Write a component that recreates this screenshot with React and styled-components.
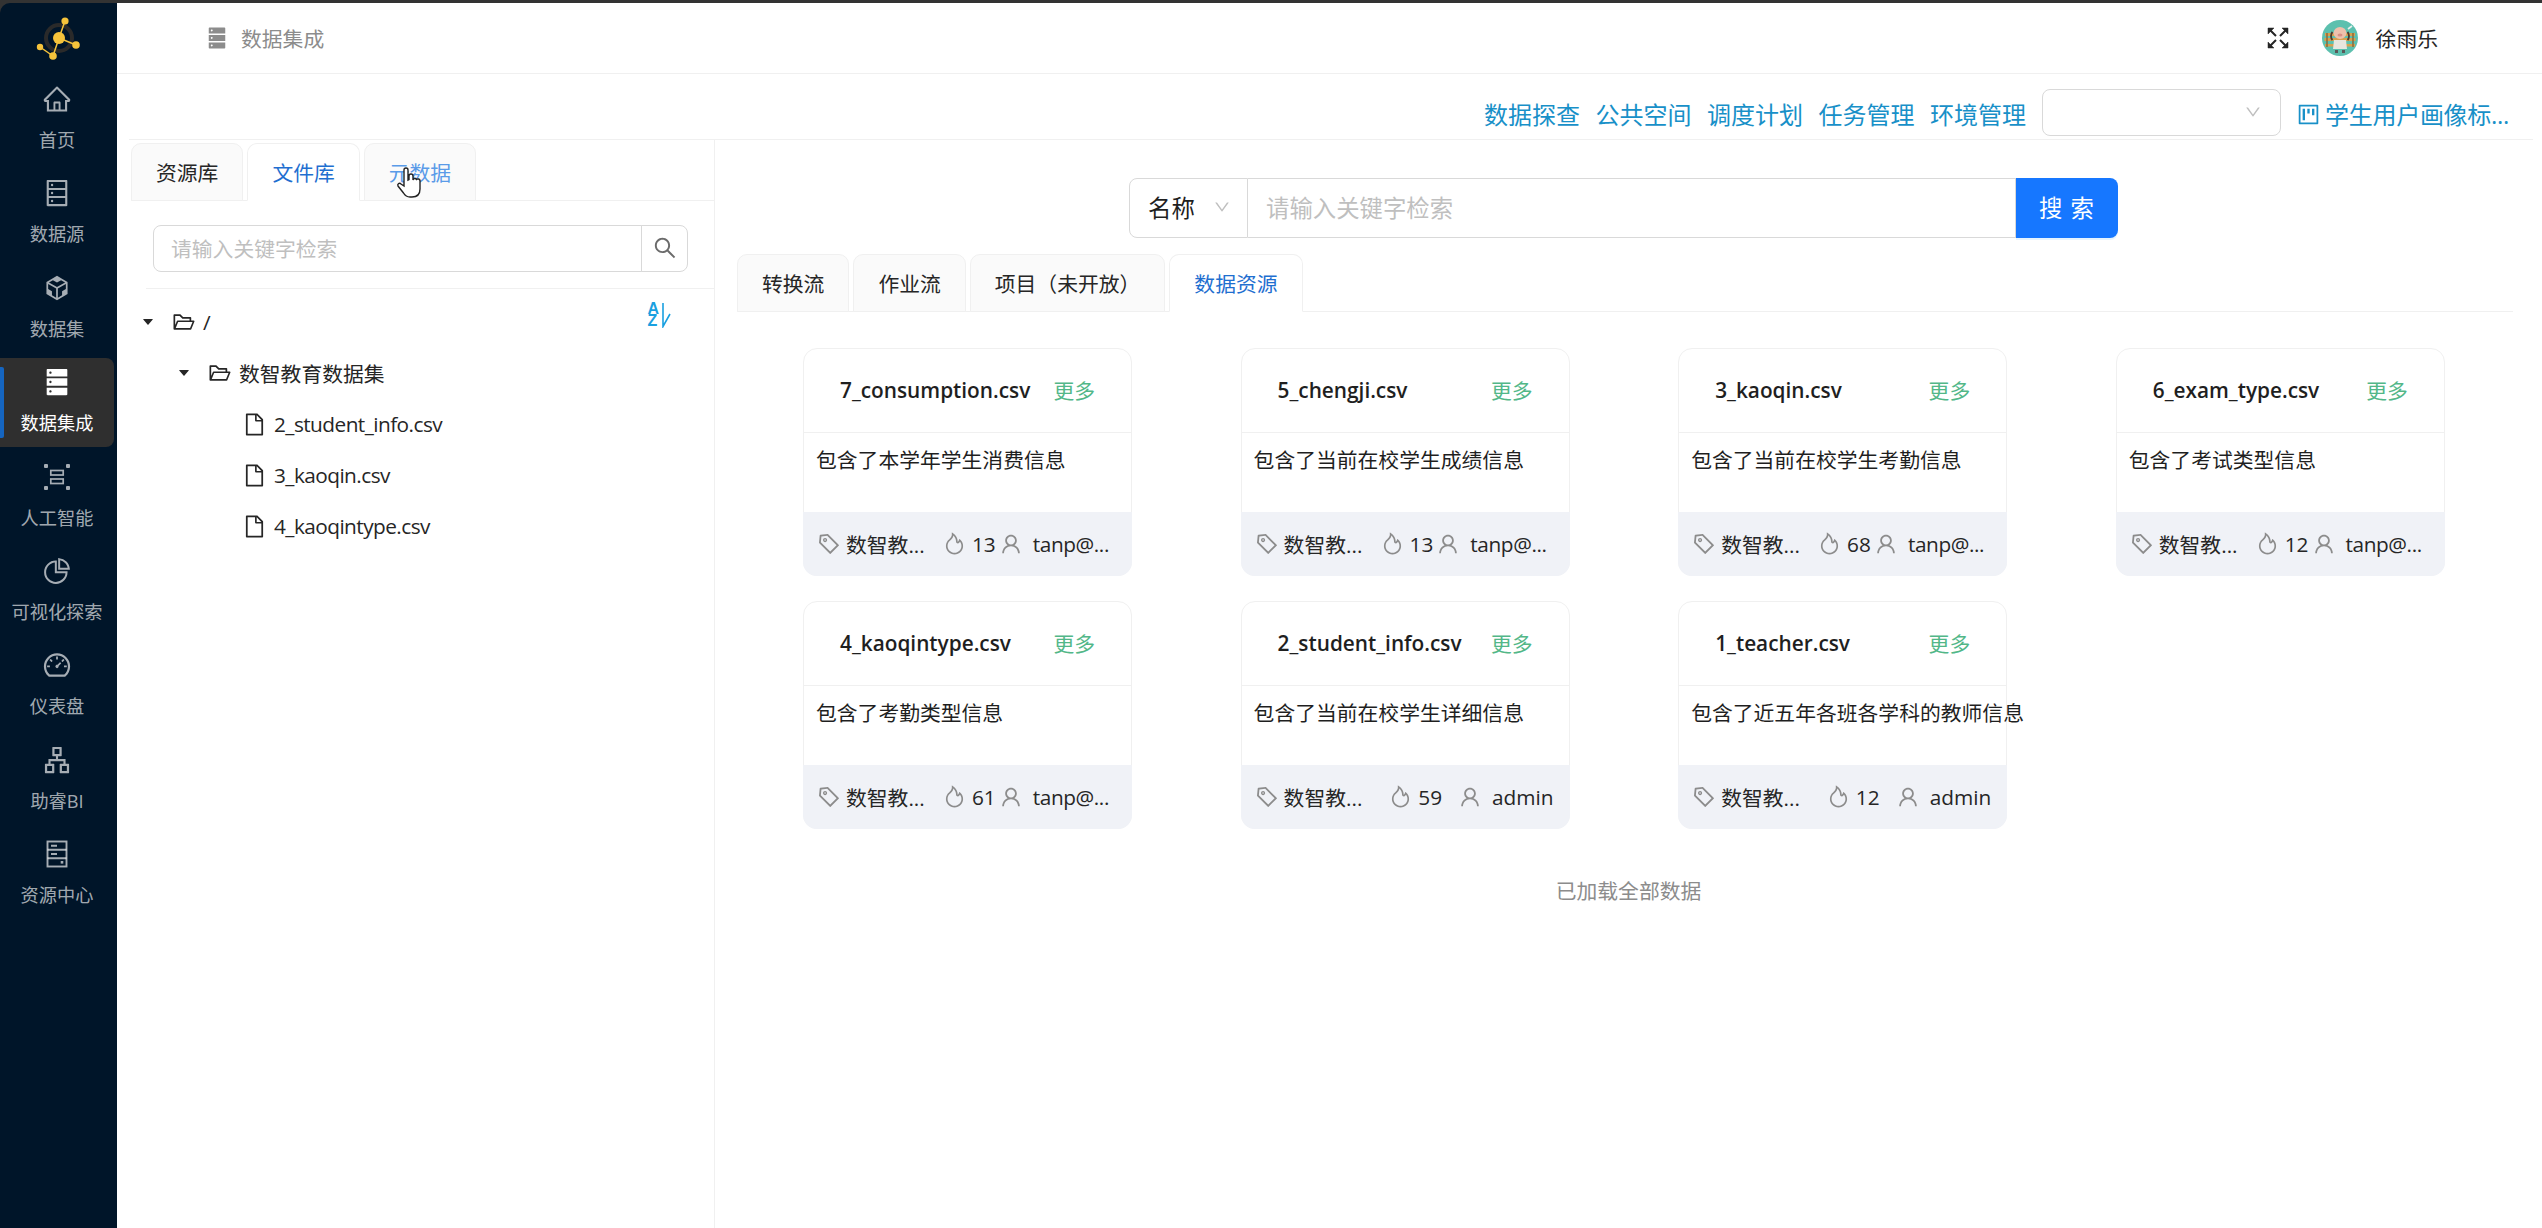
import React from 'react';
import styled, { createGlobalStyle } from 'styled-components';
import {
  AiOutlineHome, AiOutlineDatabase, AiOutlineCodeSandbox, AiFillDatabase,
  AiOutlinePieChart, AiOutlineDashboard, AiOutlineApartment, AiOutlineSearch, AiOutlineDown,
  AiOutlineFolderOpen, AiOutlineFile, AiFillCaretDown, AiOutlineTag,
  AiOutlineFire, AiOutlineUser, AiOutlineProject,
} from 'react-icons/ai';

const GlobalStyle = createGlobalStyle`
  html, body { margin: 0; padding: 0; height: 100%; }
  body {
    font-family: "Open Sans", "Noto Sans CJK SC", sans-serif;
    font-size: 20.8px;
    color: #1f1f1f;
    background: #fff;
  }
  * { box-sizing: border-box; }
`;

const Shell = styled.div`
  display: flex;
  height: 100vh;
  min-height: 1228px;
  padding-top: 3px;
  background: #333;
  overflow: hidden;
`;

const Sidebar = styled.aside`
  width: 117px;
  flex: none;
  background: #001529;
  border-top-left-radius: 10px;
  display: flex;
  flex-direction: column;
`;

const LogoBox = styled.div`
  height: 72px;
  display: flex;
  align-items: center;
  justify-content: center;
`;

const NavList = styled.nav`
  display: flex;
  flex-direction: column;
  gap: 5.9px;
`;

const NavItem = styled.div`
  position: relative;
  width: 114px;
  height: 88.5px;
  padding-top: 9px;
  display: flex;
  flex-direction: column;
  align-items: center;
  gap: 14px;
  border-radius: 0 8px 8px 0;
  color: ${(p) => (p.$active ? '#fff' : 'rgba(255,255,255,0.65)')};
  background: ${(p) => (p.$active ? '#2f2f2f' : 'transparent')};
  font-size: 18.2px;
  line-height: 24px;
  svg { width: 30px; height: 30px; flex: none; }
  &::before {
    content: '';
    display: ${(p) => (p.$active ? 'block' : 'none')};
    position: absolute;
    left: 0;
    top: 9px;
    bottom: 9px;
    width: 4px;
    background: #1565c0;
    border-radius: 0 2px 2px 0;
  }
`;

const Main = styled.div`
  flex: 1;
  min-width: 0;
  display: flex;
  flex-direction: column;
  background: #fff;
`;

const Header = styled.header`
  height: 71px;
  flex: none;
  display: flex;
  align-items: center;
  padding: 0 104px 0 88px;
  border-bottom: 1px solid #f0f0f0;
`;

const Crumb = styled.div`
  display: flex;
  align-items: center;
  gap: 12px;
  color: #8c8c8c;
  svg { font-size: 24px; }
`;

const UserBox = styled.div`
  margin-left: auto;
  display: flex;
  align-items: center;
  color: #262626;
  svg.full { margin-right: 32px; }
  span { margin-left: 18px; }
`;

const Toolbar = styled.div`
  height: 66px;
  flex: none;
  margin: 0 9px 0 12px;
  display: flex;
  align-items: center;
  justify-content: flex-end;
  gap: 15.5px;
  padding: 11px 24px 0 0;
  border-bottom: 1px solid #f0f0f0;
`;

const ToolLink = styled.a`
  padding-top: 5px;
  color: #1890c8;
  font-size: 24px;
  line-height: 32px;
  white-space: nowrap;
`;

const ProjectLink = styled(ToolLink)`
  display: flex;
  align-items: center;
  gap: 4px;
  letter-spacing: -0.3px;
  svg { font-size: 25px; }
`;

const SelectBox = styled.div`
  width: ${(p) => p.$width}px;
  height: ${(p) => p.$height}px;
  flex: none;
  display: flex;
  align-items: center;
  justify-content: space-between;
  padding: 0 18px;
  background: #fff;
  border: 1px solid #d9d9d9;
  border-radius: 8px;
  svg { font-size: 18px; color: #bfbfbf; margin-left: auto; }
`;

const Content = styled.div`
  flex: 1;
  display: flex;
  min-height: 0;
`;

const LeftPanel = styled.section`
  width: 598px;
  flex: none;
  padding-top: 3px;
  border-right: 1px solid #f0f0f0;
`;

const TabRow = styled.div`
  height: 58px;
  margin-left: ${(p) => p.$left}px;
  display: flex;
  gap: 4px;
  border-bottom: 1px solid #f0f0f0;
`;

const Tab = styled.div`
  height: 58px;
  padding: 0 24px;
  display: flex;
  align-items: center;
  white-space: nowrap;
  background: ${(p) => (p.$active ? '#fff' : '#fafafa')};
  color: ${(p) => (p.$active ? '#1f6fd0' : p.$hover ? '#5a9be8' : '#262626')};
  border: 1px solid #f0f0f0;
  border-bottom-color: ${(p) => (p.$active ? '#fff' : '#f0f0f0')};
  border-radius: 10px 10px 0 0;
`;

const HoverTab = styled(Tab)`
  position: relative;
`;

const HandCursor = styled.svg`
  position: absolute;
  left: 30px;
  top: 21px;
  width: 28px;
  height: 34px;
`;

const TreeSearch = styled.div`
  display: flex;
  width: 535px;
  height: 47px;
  margin: 23.5px 0 0 36px;
`;

const TreeInput = styled.div`
  flex: 1;
  display: flex;
  align-items: center;
  padding-left: 17px;
  color: #bfbfbf;
  border: 1px solid #d9d9d9;
  border-radius: 8px 0 0 8px;
`;

const TreeButton = styled.div`
  width: 47px;
  margin-left: -1px;
  display: flex;
  align-items: center;
  justify-content: center;
  border: 1px solid #d9d9d9;
  border-radius: 0 8px 8px 0;
  svg { font-size: 26px; color: #6b6b6b; }
`;

const TreeDivider = styled.div`
  height: 1px;
  margin: 16px 0 8px 29px;
  background: #f0f0f0;
`;

const TreeRow = styled.div`
  height: 51px;
  display: flex;
  align-items: center;
  padding-left: ${(p) => p.$indent}px;
  color: #262626;
  letter-spacing: ${(p) => (p.$file ? '-0.55px' : '0')};
  svg.caret { font-size: 14px; margin-right: 17px; }
  svg.folder { font-size: 24px; margin-right: 7px; }
  svg.file { font-size: 25px; margin-right: 7px; }
`;

const SortButton = styled.div`
  margin: -13px 43px 0 auto;
  display: flex;
  align-items: flex-start;
  gap: 3px;
  color: #1aa0e0;
`;

const SortLetters = styled.div`
  display: flex;
  flex-direction: column;
  font-family: "Liberation Sans", sans-serif;
  font-size: 16px;
  font-weight: 700;
  line-height: 12px;
`;

const RightPanel = styled.section`
  flex: 1;
  min-width: 0;
  padding-top: 37.5px;
`;

const SearchGroup = styled.div`
  display: flex;
  width: 989px;
  height: 60px;
  margin-left: 414px;
  font-size: 23.4px;
`;

const NameSelect = styled(SelectBox)`
  padding: 0 16px 2px 18px;
  border-radius: 8px 0 0 8px;
  color: #1f1f1f;
`;

const SearchInput = styled.div`
  flex: 1;
  display: flex;
  align-items: center;
  padding: 0 0 2px 18px;
  color: #bfbfbf;
  border: 1px solid #d9d9d9;
  border-left: none;
`;

const SearchButton = styled.div`
  width: 102px;
  display: flex;
  align-items: center;
  justify-content: center;
  padding-bottom: 2px;
  color: #fff;
  background: #1677ff;
  border-radius: 0 8px 8px 0;
  letter-spacing: 1px;
  box-shadow: 0 2px 0 rgba(5, 145, 255, 0.1);
`;

const ContentTabs = styled(TabRow)`
  margin: 16.5px 29px 0 ${(p) => p.$left}px;
`;

const CardGrid = styled.div`
  display: grid;
  grid-template-columns: repeat(4, 329px);
  column-gap: 108.6px;
  row-gap: 25px;
  margin: 35.5px 0 0 88px;
`;

const Card = styled.article`
  height: 228px;
  display: flex;
  flex-direction: column;
  background: #fff;
  border: 1px solid #f0f0f0;
  border-radius: 14px;
`;

const CardHead = styled.div`
  height: 84px;
  flex: none;
  display: flex;
  align-items: center;
  padding: 0 36px;
  border-bottom: 1px solid #f0f0f0;
`;

const CardTitle = styled.div`
  flex: 1;
  font-weight: 600;
  color: #1f1f1f;
  white-space: nowrap;
`;

const MoreLink = styled.a`
  color: #52b788;
`;

const CardBody = styled.div`
  flex: 1;
  padding: 13.5px 12px 0;
  line-height: 28px;
  white-space: nowrap;
  color: #1f1f1f;
`;

const CardFoot = styled.div`
  height: 64px;
  flex: none;
  margin: 0 -1px -1px;
  padding: 0 16px 0 14px;
  display: flex;
  align-items: center;
  background: #f0f2f7;
  border-radius: 0 0 14px 14px;
  color: #262626;
  svg { color: #8c8c8c; font-size: 24px; flex: none; }
`;

const TagCell = styled.div`
  display: flex;
  align-items: center;
  gap: 5px;
  svg { transform: scaleX(-1); }
`;

const HeatCell = styled.div`
  margin-left: auto;
  display: flex;
  align-items: center;
  gap: 5px;
  svg { font-size: 25px; }
`;

const OwnerCell = styled.div`
  margin-left: ${(p) => (p.$short ? 3 : 16)}px;
  margin-right: ${(p) => (p.$short ? 7 : 0)}px;
  display: flex;
  align-items: center;
  gap: 10px;
  letter-spacing: ${(p) => (p.$short ? '-0.4px' : '0')};
`;

const LoadedNote = styled.div`
  margin-top: 48px;
  text-align: center;
  line-height: 28px;
  color: #8c8c8c;
`;

function ScanIcon() {
  return (
    <svg viewBox="0 0 30 30" fill="currentColor">
      <rect x="2" y="2" width="4" height="4" rx="1" />
      <rect x="24" y="2" width="4" height="4" rx="1" />
      <rect x="2" y="24" width="4" height="4" rx="1" />
      <rect x="24" y="24" width="4" height="4" rx="1" />
      <rect x="8.800" y="8.500" width="12.400" height="4.500" fill="none" stroke="currentColor" strokeWidth="1.700" />
      <rect x="8.800" y="17" width="12.400" height="4.500" fill="none" stroke="currentColor" strokeWidth="1.700" />
    </svg>
  );
}

function ResourceIcon() {
  return (
    <svg viewBox="0 0 30 30" fill="none" stroke="currentColor" strokeWidth="1.900">
      <rect x="5.500" y="2.500" width="19" height="25" />
      <path d="M5.500 10.800h19M5.500 19.300h19" />
      <path d="M9 6.700h6M9 15h6" />
      <rect x="18.700" y="22" width="2.600" height="2.600" fill="currentColor" stroke="none" />
    </svg>
  );
}

function ExpandIcon() {
  return (
    <svg className="full" width="24" height="24" viewBox="0 0 24 24" fill="#262626" stroke="#262626" strokeWidth="2">
      <path d="M4 4l6 6M20 4l-6 6M4 20l6-6M20 20l-6-6" fill="none" />
      <path d="M2 2h6l-6 6zM22 2h-6l6 6zM2 22h6l-6-6zM22 22h-6l6-6z" strokeWidth="0.500" />
    </svg>
  );
}

function SortArrow() {
  return (
    <svg width="9" height="25" viewBox="0 0 9 25" fill="none" stroke="currentColor" strokeWidth="1.600">
      <path d="M1 0v23.500L8 11" />
    </svg>
  );
}

const NAV = [
  { label: '首页', Icon: AiOutlineHome },
  { label: '数据源', Icon: AiOutlineDatabase },
  { label: '数据集', Icon: AiOutlineCodeSandbox },
  { label: '数据集成', Icon: AiFillDatabase, active: true },
  { label: '人工智能', Icon: ScanIcon },
  { label: '可视化探索', Icon: AiOutlinePieChart },
  { label: '仪表盘', Icon: AiOutlineDashboard },
  { label: '助睿BI', Icon: AiOutlineApartment },
  { label: '资源中心', Icon: ResourceIcon },
];

const FILES = [
  { name: '7_consumption.csv', desc: '包含了本学年学生消费信息', heat: 13, owner: 'tanp@...' },
  { name: '5_chengji.csv', desc: '包含了当前在校学生成绩信息', heat: 13, owner: 'tanp@...' },
  { name: '3_kaoqin.csv', desc: '包含了当前在校学生考勤信息', heat: 68, owner: 'tanp@...' },
  { name: '6_exam_type.csv', desc: '包含了考试类型信息', heat: 12, owner: 'tanp@...' },
  { name: '4_kaoqintype.csv', desc: '包含了考勤类型信息', heat: 61, owner: 'tanp@...' },
  { name: '2_student_info.csv', desc: '包含了当前在校学生详细信息', heat: 59, owner: 'admin' },
  { name: '1_teacher.csv', desc: '包含了近五年各班各学科的教师信息', heat: 12, owner: 'admin' },
];

function Logo() {
  return (
    <svg width="46" height="48" viewBox="0 0 46 48">
      <circle cx="23" cy="23" r="13" fill="none" stroke="#2a2a2a" strokeWidth="4" />
      <g stroke="#f5c33b" strokeWidth="1.5">
        <line x1="23" y1="23" x2="29" y2="6" />
        <line x1="23" y1="23" x2="40" y2="30" />
        <line x1="23" y1="23" x2="17" y2="41" />
        <line x1="17" y1="41" x2="4" y2="32" />
      </g>
      <g fill="#f5c33b">
        <circle cx="23" cy="23" r="6" />
        <circle cx="29" cy="6" r="3.6" />
        <circle cx="40" cy="30" r="3.8" />
        <circle cx="17" cy="41" r="3.8" />
        <circle cx="4" cy="32" r="3.2" />
      </g>
    </svg>
  );
}

function Avatar() {
  return (
    <svg width="36" height="36" viewBox="0 0 36 36">
      <circle cx="18" cy="18" r="18" fill="#5cc0ae" />
      <path d="M3 13h30v3H3zM2.500 18h31v3h-31zM3 24h30v2.500H3z" fill="#d9a04e" />
      <path d="M5 13v14M31 13v14" stroke="#8a6a3a" strokeWidth="1.500" />
      <path d="M12 20h12l1 9H11z" fill="#e8e6df" />
      <path d="M13 30h3v3h-3zM20 30h3v3h-3z" fill="#5a5a5a" />
      <ellipse cx="18" cy="13" rx="6.500" ry="6" fill="#eec0ac" />
      <path d="M10.500 12c-2 2-2 6 0 8M25.500 12c2 2 2 6 0 8" stroke="#4a3a30" strokeWidth="1.800" fill="none" />
      <ellipse cx="18" cy="15" rx="2.500" ry="1.600" fill="#d98f86" />
      <path d="M26 9l4-3" stroke="#e6f0ee" strokeWidth="1.600" />
    </svg>
  );
}

function FileCard({ name, desc, heat, owner }) {
  const short = owner !== 'admin';
  return (
    <Card>
      <CardHead>
        <CardTitle>{name}</CardTitle>
        <MoreLink>更多</MoreLink>
      </CardHead>
      <CardBody>{desc}</CardBody>
      <CardFoot>
        <TagCell><AiOutlineTag />数智教...</TagCell>
        <HeatCell><AiOutlineFire />{heat}</HeatCell>
        <OwnerCell $short={short}><AiOutlineUser />{owner}</OwnerCell>
      </CardFoot>
    </Card>
  );
}

export default function App() {
  return (
    <>
      <GlobalStyle />
      <Shell>
        <Sidebar>
          <LogoBox><Logo /></LogoBox>
          <NavList>
            {NAV.map(({ label, Icon, active }) => (
              <NavItem key={label} $active={active}>
                <Icon />
                {label}
              </NavItem>
            ))}
          </NavList>
        </Sidebar>
        <Main>
          <Header>
            <Crumb><AiFillDatabase />数据集成</Crumb>
            <UserBox>
              <ExpandIcon />
              <Avatar />
              <span>徐雨乐</span>
            </UserBox>
          </Header>
          <Toolbar>
            <ToolLink>数据探查</ToolLink>
            <ToolLink>公共空间</ToolLink>
            <ToolLink>调度计划</ToolLink>
            <ToolLink>任务管理</ToolLink>
            <ToolLink>环境管理</ToolLink>
            <SelectBox $width={239} $height={47}><AiOutlineDown /></SelectBox>
            <ProjectLink><AiOutlineProject />学生用户画像标...</ProjectLink>
          </Toolbar>
          <Content>
            <LeftPanel>
              <TabRow $left={14}>
                <Tab>资源库</Tab>
                <Tab $active>文件库</Tab>
                <HoverTab $hover>
                  元数据
                  <HandCursor viewBox="0 0 28 34">
                    <path
                      d="M9 21V5a2 2 0 0 1 4 0v10l1-.5V11a2 2 0 0 1 4 0v4a2 2 0 0 1 3.6-.5 2 2 0 0 1 3.4 1.2V24c0 5-3 8-8 8h-2c-3 0-5-1.500-6.500-4L3 21c-1-2 1.500-3.500 3-2z"
                      fill="#fff"
                      stroke="#222"
                      strokeWidth="1.4"
                    />
                  </HandCursor>
                </HoverTab>
              </TabRow>
              <TreeSearch>
                <TreeInput>请输入关键字检索</TreeInput>
                <TreeButton><AiOutlineSearch /></TreeButton>
              </TreeSearch>
              <TreeDivider />
              <TreeRow $indent={24}>
                <AiFillCaretDown className="caret" />
                <AiOutlineFolderOpen className="folder" />
                /
                <SortButton>
                  <SortLetters><span>A</span><span>Z</span></SortLetters>
                  <SortArrow />
                </SortButton>
              </TreeRow>
              <TreeRow $indent={60}>
                <AiFillCaretDown className="caret" />
                <AiOutlineFolderOpen className="folder" />
                数智教育数据集
              </TreeRow>
              <TreeRow $indent={125} $file><AiOutlineFile className="file" />2_student_info.csv</TreeRow>
              <TreeRow $indent={125} $file><AiOutlineFile className="file" />3_kaoqin.csv</TreeRow>
              <TreeRow $indent={125} $file><AiOutlineFile className="file" />4_kaoqintype.csv</TreeRow>
            </LeftPanel>
            <RightPanel>
              <SearchGroup>
                <NameSelect $width={119} $height={60}>名称<AiOutlineDown /></NameSelect>
                <SearchInput>请输入关键字检索</SearchInput>
                <SearchButton>搜 索</SearchButton>
              </SearchGroup>
              <ContentTabs $left={22}>
                <Tab>转换流</Tab>
                <Tab>作业流</Tab>
                <Tab>项目（未开放）</Tab>
                <Tab $active>数据资源</Tab>
              </ContentTabs>
              <CardGrid>
                {FILES.map((file) => <FileCard key={file.name} {...file} />)}
              </CardGrid>
              <LoadedNote>已加载全部数据</LoadedNote>
            </RightPanel>
          </Content>
        </Main>
      </Shell>
    </>
  );
}
